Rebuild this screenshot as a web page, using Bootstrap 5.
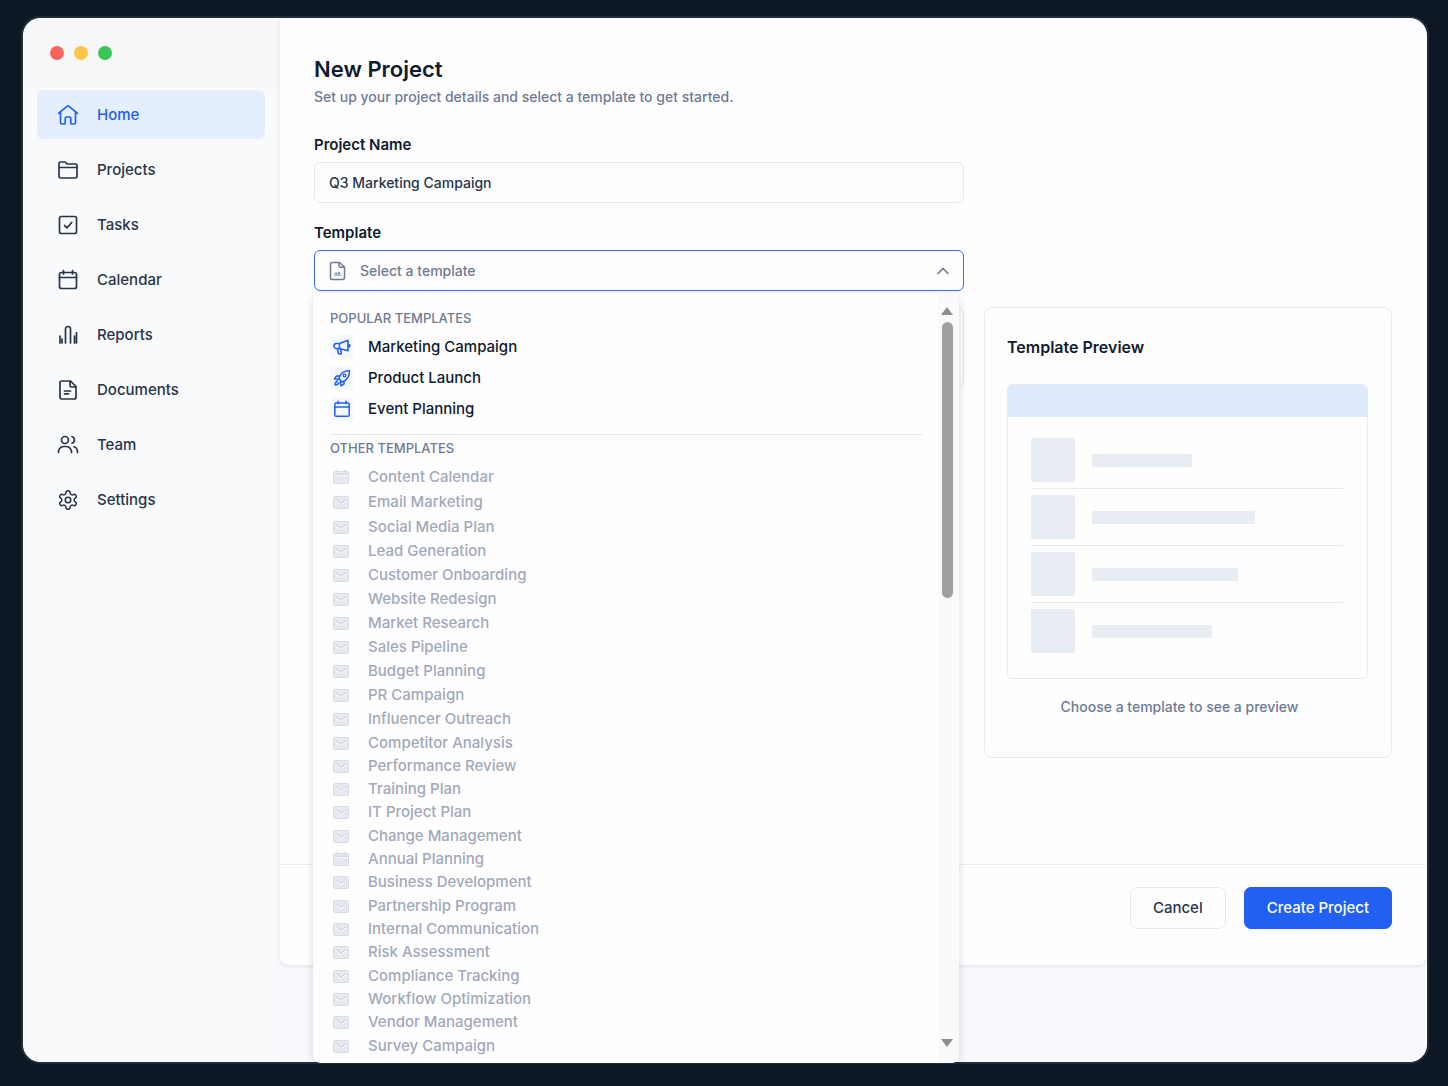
<!DOCTYPE html>
<html lang="en">
<head>
<meta charset="utf-8">
<meta name="viewport" content="width=device-width, initial-scale=1">
<title>New Project</title>
<link href="https://cdn.jsdelivr.net/npm/bootstrap@5.3.0/dist/css/bootstrap.min.css" rel="stylesheet">
<style>
:root{--ink:#0f1b2e;--nav-ink:#27344a;--muted:#6e7a94;--faint:#a1a9ba;--line:#e6e9f2;--blue:#2160f3;--soft:#e5eefe}
body{background:#0d1824;color:var(--ink);font-family:Inter,"Noto Sans",sans-serif;font-size:15px;line-height:22px}
svg{display:block;flex:none}
.line-icon{fill:none;stroke:currentColor;stroke-width:1.7;stroke-linecap:round;stroke-linejoin:round}
.app-window{margin:18px 21px 24px 23px;min-height:calc(100vh - 42px);background:#f8f9fc;border:1px solid #fff;border-radius:17px;box-shadow:0 0 0 2px #222c39}
.side{flex:0 0 256px;background:#f9fafc;border-radius:16px 0 0 16px;overflow:hidden}
.side-top{height:69px;padding:27px 26px;gap:10px;background:#f6f7f9}
.dot{width:14px;height:14px;border-radius:50%}
.dot-r{background:#f8635f}.dot-y{background:#fac548}.dot-g{background:#3bc553}
.side-nav{padding:2px 15px 0 13px;gap:6px}
.side-nav .nav-link{height:49px;padding:0 20px;gap:18px;border-radius:6px;color:var(--nav-ink);font-weight:500}
.side-nav .nav-link.active{background:var(--soft);color:var(--blue)}
.workspace{padding-bottom:96px;min-width:0}
.panel{background:#fefefe;border-radius:0 16px 8px 8px;box-shadow:0 1px 4px rgba(30,45,80,.12)}
.panel-body{padding:34px 34px 24px 34px}
.page-title{font-size:22px;line-height:32px;font-weight:600;margin:0}
.page-sub{color:var(--muted);line-height:22px;margin:1px 0 26px;font-size:14px;font-weight:500}
.form-grid{display:grid;grid-template-columns:minmax(0,650fr) minmax(0,408fr);gap:16px 20px;align-items:start}
.field-label{font-weight:600;font-size:15px;margin-bottom:6px;display:block}
.field + .field-label{margin-top:19px}
.field{height:41px;border:1px solid var(--line);border-radius:6px;font-size:14px;font-weight:500;color:var(--nav-ink);padding:0 14px;background:#fefefe}
.field-area{height:80px;resize:none}
.picker{border-color:#3571ee;color:var(--muted);gap:14px;text-align:left}
.picker:hover,.picker:focus{border-color:#3571ee;background:#fefefe;color:var(--muted)}
.menu{position:absolute;z-index:10;top:43px;left:-1px;right:5px;background:#fefefe;border-radius:8px;box-shadow:0 2px 9px rgba(25,40,75,.17);overflow:hidden}
.menu-list{padding:16px 15px 6px 17px;min-width:0}
.menu-head{font-size:13px;line-height:18px;font-weight:500;color:var(--muted);margin:0}
.pop-item{height:31px;gap:14px;color:var(--ink);text-decoration:none;font-size:15px;font-weight:500}
.tile{width:24px;height:24px;background:#f5f8ff;border-radius:4px;color:var(--blue);display:flex;align-items:center;justify-content:center}
.menu-rule{border-top:1px solid var(--line);margin:10px 0 4px}
.other-list{padding-top:7px}
.other-item{height:24px;padding-left:3px;gap:18px;color:var(--faint);font-size:15px;font-weight:500}
.other-item:nth-child(-n+3){height:25px}
.other-item:nth-child(n+12){height:23px}
.other-item:nth-child(3n+15){height:24px}
.other-item svg{margin-right:1px}
.scroll-track{flex:0 0 21px;background:#fafafb;padding:14px 3px 16px 0;color:#8e8e8e}
.scroll-thumb{width:11px;height:276px;margin:7px 0 auto;border-radius:6px;background:#a0a0a0}
.preview{border:1px solid var(--line);border-radius:8px;padding:27px 23px 39px 22px}
.preview h2{font-size:16px;line-height:24px;font-weight:600;margin:0 0 25px}
.frame{border:1px solid var(--line);border-radius:6px;overflow:hidden}
.frame-head{height:32px;background:#e0eafd}
.frame-body{padding:15px 24px 19px 23px}
.ghost{padding:6px 0;gap:17px}
.ghost + .ghost{border-top:1px solid var(--line)}
.ghost-pic{flex:0 0 44px;height:44px;background:#e8ecf3;border-radius:2px}
.ghost-bar{height:13px;background:#e8ecf3}
.caption-text{color:var(--muted);margin:17px 0 0;font-size:14px;font-weight:500}
.panel-foot{border-top:1px solid #eceef4;padding:22px 34px 36px;gap:18px}
.panel-foot .btn{height:42px;border-radius:7px;font-size:15px;line-height:22px;font-weight:500;padding:0 22px}
.btn-cancel{border:1px solid var(--line);color:var(--nav-ink);background:#fefefe}
.btn-create{background:var(--blue);color:#fff;border-color:var(--blue)}
</style>
<script src="https://cdn.jsdelivr.net/npm/bootstrap@5.3.0/dist/js/bootstrap.bundle.min.js"></script>
</head>
<body>
<svg width="0" height="0" class="position-absolute" aria-hidden="true">
  <symbol id="mail" viewBox="0 0 16 14"><rect x=".5" y="1.5" width="15" height="12" rx="1.5" fill="#e6e9f0" stroke="#d6dbe6"/><path d="M3 5.500 8 9.300l5-3.800" fill="none" stroke="#fafbfc" stroke-width="1.200"/><path d="M3 4.500 8 8.300l5-3.800" fill="none" stroke="#c6cddb"/></symbol>
  <symbol id="cal" viewBox="0 0 16 14"><rect x=".5" y="1.500" width="15" height="12" rx="1.500" fill="#e6e9f0" stroke="#d6dbe6"/><path d="M1 5.200h14" stroke="#fafbfc" stroke-width="1.200"/><path d="M1 4.200h14M4 0v2.500M12 0v2.500" stroke="#cbd1dd"/></symbol>
</svg>
<div class="app-window d-flex">
  <aside class="side">
    <div class="side-top d-flex"><span class="dot dot-r"></span><span class="dot dot-y"></span><span class="dot dot-g"></span></div>
    <nav class="side-nav nav flex-column" aria-label="Main">
      <a class="nav-link active d-flex align-items-center" aria-current="page" href="#"><svg class="line-icon" width="22" height="22" viewBox="0 0 22 22"><path d="M1.500 9.300 10 2.400a1.600 1.600 0 0 1 2 0l8.500 6.900M3.500 8v10.500A1.500 1.500 0 0 0 5 20h2.200a1 1 0 0 0 1-1v-4.500a1.500 1.500 0 0 1 1.500-1.500h2.600a1.500 1.500 0 0 1 1.500 1.500V19a1 1 0 0 0 1 1H17a1.500 1.500 0 0 0 1.500-1.500V8"/></svg>Home</a>
      <a class="nav-link d-flex align-items-center" href="#"><svg class="line-icon" width="22" height="22" viewBox="0 0 22 22"><path d="M2 17.500v-13A1.500 1.500 0 0 1 3.500 3h4.200a1.500 1.500 0 0 1 1.200.6L10.200 5h8.300A1.500 1.500 0 0 1 20 6.500v11a1.500 1.500 0 0 1-1.500 1.500h-15A1.500 1.500 0 0 1 2 17.500ZM2 8.500h18"/></svg>Projects</a>
      <a class="nav-link d-flex align-items-center" href="#"><svg class="line-icon" width="22" height="22" viewBox="0 0 22 22"><rect x="2.500" y="2.500" width="17" height="17" rx="1.800"/><path d="m7.500 11.500 2.500 2.300 4.700-5.300"/></svg>Tasks</a>
      <a class="nav-link d-flex align-items-center" href="#"><svg class="line-icon" width="22" height="22" viewBox="0 0 22 22"><rect x="2.500" y="3.500" width="17" height="16" rx="2"/><path d="M2.500 8.500h17M6.500 1.500V5M15.500 1.500V5"/></svg>Calendar</a>
      <a class="nav-link d-flex align-items-center" href="#"><svg class="line-icon" width="22" height="22" viewBox="0 0 22 22"><path d="M3 19v-7M5 19v-4M8.500 19V5a2.500 2.500 0 0 1 5 0v14M17.500 19v-7M19.500 19V8.500"/></svg>Reports</a>
      <a class="nav-link d-flex align-items-center" href="#"><svg class="line-icon" width="22" height="22" viewBox="0 0 22 22"><path d="M4.500 2h9L19 7.500V18a2 2 0 0 1-2 2H4.500A1.500 1.500 0 0 1 3 18.500v-15A1.500 1.500 0 0 1 4.500 2ZM13 2v4.500A1.500 1.500 0 0 0 14.500 8H19M7.500 12h6M7.500 14.800h4"/></svg>Documents</a>
      <a class="nav-link d-flex align-items-center" href="#"><svg class="line-icon" width="22" height="22" viewBox="0 0 22 22"><circle cx="8" cy="6" r="3.500"/><path d="M1.500 18.500V17a6 6 0 0 1 6-4.500h1a6 6 0 0 1 6 4.500v1.500M15 2.800a3.300 3.300 0 0 1 0 6.400M17 12.700c2.400.6 3.500 2.600 3.500 5.800"/></svg>Team</a>
      <a class="nav-link d-flex align-items-center" href="#"><svg class="line-icon" width="22" height="22" viewBox="0 0 24 24"><path d="M12.200 2h-.4a2 2 0 0 0-2 2v.2a2 2 0 0 1-1 1.700l-.4.300a2 2 0 0 1-2 0l-.200-.100a2 2 0 0 0-2.700.700l-.200.400a2 2 0 0 0 .7 2.700l.2.100a2 2 0 0 1 1 1.700v.5a2 2 0 0 1-1 1.800l-.2.100a2 2 0 0 0-.7 2.700l.2.400a2 2 0 0 0 2.700.7l.2-.1a2 2 0 0 1 2 0l.4.300a2 2 0 0 1 1 1.700v.2a2 2 0 0 0 2 2h.4a2 2 0 0 0 2-2v-.2a2 2 0 0 1 1-1.700l.4-.3a2 2 0 0 1 2 0l.2.100a2 2 0 0 0 2.700-.7l.2-.4a2 2 0 0 0-.7-2.700l-.2-.1a2 2 0 0 1-1-1.800v-.5a2 2 0 0 1 1-1.700l.2-.1a2 2 0 0 0 .7-2.700l-.2-.4a2 2 0 0 0-2.700-.7l-.2.100a2 2 0 0 1-2 0l-.4-.3a2 2 0 0 1-1-1.700V4a2 2 0 0 0-2-2z"/><circle cx="12" cy="12" r="3"/></svg>Settings</a>
    </nav>
  </aside>
  <main class="workspace flex-grow-1 d-flex flex-column">
    <form class="panel flex-grow-1 d-flex flex-column" onsubmit="return false">
      <div class="panel-body flex-grow-1">
        <h1 class="page-title">New Project</h1>
        <p class="page-sub">Set up your project details and select a template to get started.</p>
        <div class="form-grid">
          <div>
            <label class="field-label" for="project-name">Project Name</label>
            <input class="form-control field" id="project-name" type="text" value="Q3 Marketing Campaign">
            <label class="field-label" for="template-picker">Template</label>
            <div class="position-relative">
              <button type="button" class="btn field picker w-100 d-flex align-items-center" id="template-picker" aria-haspopup="true" aria-expanded="true" aria-controls="template-menu">
                <svg class="line-icon" width="17" height="20" viewBox="0 0 17 20"><path d="M3 1.500h7.500L15.500 6v10.500a2 2 0 0 1-2 2H3A1.500 1.500 0 0 1 1.500 17V3A1.500 1.500 0 0 1 3 1.500ZM10 1.500V5a1.300 1.300 0 0 0 1.300 1.300h4.200" stroke-width="1.500"/><path d="M5.500 14h6.500M6 12.800l1-1.300 1 1.300M9 12.800l.8-2 1.200 2" stroke-width="1"/></svg>
                <span class="flex-grow-1">Select a template</span>
                <svg class="line-icon" width="12" height="8" viewBox="0 0 12 8"><path d="M1 6.500 6 1.500l5 5"/></svg>
              </button>
              <div class="menu d-flex" id="template-menu">
                <div class="menu-list flex-grow-1">
                  <h2 class="menu-head mb-1">POPULAR TEMPLATES</h2>
                  <a class="pop-item d-flex align-items-center" href="#"><span class="tile"><svg class="line-icon" width="18" height="18" viewBox="0 0 18 18"><path d="M3.500 5.500h3L15 2.300v10.500l-8.500-2.300h-3a2.500 2.500 0 0 1 0-5ZM6.500 5.500v5M4.500 10.800l.8 4.400a1 1 0 0 0 1 .8H7.500a.8.8 0 0 0 .8-1l-.7-4M15 6.500l1.700.3v1.800L15 9" stroke-width="1.600"/></svg></span>Marketing Campaign</a>
                  <a class="pop-item d-flex align-items-center" href="#"><span class="tile"><svg class="line-icon" width="18" height="18" viewBox="0 0 18 18"><path d="M6 9c1-3.500 4-7.200 10.500-7.500.2 6-3 9.800-7.500 11.500L6 9.500ZM6.500 7H3.500L1.500 10l4 .2M11 12v3l-3 1.800-.5-4M4.500 12c-1.500.5-2.300 2-2.500 4 2-.2 3.500-1 4-2.300" stroke-width="1.500"/><circle cx="11.500" cy="6.500" r="1.300" stroke-width="1.300"/></svg></span>Product Launch</a>
                  <a class="pop-item d-flex align-items-center" href="#"><span class="tile"><svg class="line-icon" width="18" height="18" viewBox="0 0 18 18"><rect x="1.800" y="3" width="14.400" height="13.200" rx="1.300" stroke-width="1.500"/><path d="M1.800 7h14.400M5 1.200v2.500M13 1.200v2.500" stroke-width="1.500"/></svg></span>Event Planning</a>
                  <div class="menu-rule"></div>
                  <h2 class="menu-head">OTHER TEMPLATES</h2>
                  <ul class="other-list list-unstyled m-0">
                    <li class="other-item d-flex align-items-center"><svg width="16" height="14"><use href="#cal"/></svg>Content Calendar</li>
                    <li class="other-item d-flex align-items-center"><svg width="16" height="14"><use href="#mail"/></svg>Email Marketing</li>
                    <li class="other-item d-flex align-items-center"><svg width="16" height="14"><use href="#mail"/></svg>Social Media Plan</li>
                    <li class="other-item d-flex align-items-center"><svg width="16" height="14"><use href="#mail"/></svg>Lead Generation</li>
                    <li class="other-item d-flex align-items-center"><svg width="16" height="14"><use href="#mail"/></svg>Customer Onboarding</li>
                    <li class="other-item d-flex align-items-center"><svg width="16" height="14"><use href="#mail"/></svg>Website Redesign</li>
                    <li class="other-item d-flex align-items-center"><svg width="16" height="14"><use href="#mail"/></svg>Market Research</li>
                    <li class="other-item d-flex align-items-center"><svg width="16" height="14"><use href="#mail"/></svg>Sales Pipeline</li>
                    <li class="other-item d-flex align-items-center"><svg width="16" height="14"><use href="#mail"/></svg>Budget Planning</li>
                    <li class="other-item d-flex align-items-center"><svg width="16" height="14"><use href="#mail"/></svg>PR Campaign</li>
                    <li class="other-item d-flex align-items-center"><svg width="16" height="14"><use href="#mail"/></svg>Influencer Outreach</li>
                    <li class="other-item d-flex align-items-center"><svg width="16" height="14"><use href="#mail"/></svg>Competitor Analysis</li>
                    <li class="other-item d-flex align-items-center"><svg width="16" height="14"><use href="#mail"/></svg>Performance Review</li>
                    <li class="other-item d-flex align-items-center"><svg width="16" height="14"><use href="#mail"/></svg>Training Plan</li>
                    <li class="other-item d-flex align-items-center"><svg width="16" height="14"><use href="#mail"/></svg>IT Project Plan</li>
                    <li class="other-item d-flex align-items-center"><svg width="16" height="14"><use href="#mail"/></svg>Change Management</li>
                    <li class="other-item d-flex align-items-center"><svg width="16" height="14"><use href="#cal"/></svg>Annual Planning</li>
                    <li class="other-item d-flex align-items-center"><svg width="16" height="14"><use href="#mail"/></svg>Business Development</li>
                    <li class="other-item d-flex align-items-center"><svg width="16" height="14"><use href="#mail"/></svg>Partnership Program</li>
                    <li class="other-item d-flex align-items-center"><svg width="16" height="14"><use href="#mail"/></svg>Internal Communication</li>
                    <li class="other-item d-flex align-items-center"><svg width="16" height="14"><use href="#mail"/></svg>Risk Assessment</li>
                    <li class="other-item d-flex align-items-center"><svg width="16" height="14"><use href="#mail"/></svg>Compliance Tracking</li>
                    <li class="other-item d-flex align-items-center"><svg width="16" height="14"><use href="#mail"/></svg>Workflow Optimization</li>
                    <li class="other-item d-flex align-items-center"><svg width="16" height="14"><use href="#mail"/></svg>Vendor Management</li>
                    <li class="other-item d-flex align-items-center"><svg width="16" height="14"><use href="#mail"/></svg>Survey Campaign</li>
                  </ul>
                </div>
                <div class="scroll-track d-flex flex-column align-items-center" aria-hidden="true">
                  <svg width="12" height="8" viewBox="0 0 12 8"><path d="M6 0 12 8H0Z" fill="currentColor"/></svg>
                  <div class="scroll-thumb"></div>
                  <svg width="12" height="8" viewBox="0 0 12 8"><path d="M6 8 0 0h12Z" fill="currentColor"/></svg>
                </div>
              </div>
            </div>
          </div>
          <div></div>
          <textarea class="form-control field field-area" aria-label="Description"></textarea>
          <section class="preview">
            <h2>Template Preview</h2>
            <div class="frame">
              <div class="frame-head"></div>
              <div class="frame-body">
                <div class="ghost d-flex align-items-center"><div class="ghost-pic"></div><div class="flex-grow-1"><div class="ghost-bar" style="width:40%"></div></div></div>
                <div class="ghost d-flex align-items-center"><div class="ghost-pic"></div><div class="flex-grow-1"><div class="ghost-bar" style="width:65%"></div></div></div>
                <div class="ghost d-flex align-items-center"><div class="ghost-pic"></div><div class="flex-grow-1"><div class="ghost-bar" style="width:58%"></div></div></div>
                <div class="ghost d-flex align-items-center"><div class="ghost-pic"></div><div class="flex-grow-1"><div class="ghost-bar" style="width:48%"></div></div></div>
              </div>
            </div>
            <p class="caption-text text-center pe-3">Choose a template to see a preview</p>
          </section>
        </div>
      </div>
      <div class="panel-foot d-flex justify-content-end">
        <button type="button" class="btn btn-cancel">Cancel</button>
        <button type="submit" class="btn btn-create">Create Project</button>
      </div>
    </form>
  </main>
</div>
</body>
</html>
